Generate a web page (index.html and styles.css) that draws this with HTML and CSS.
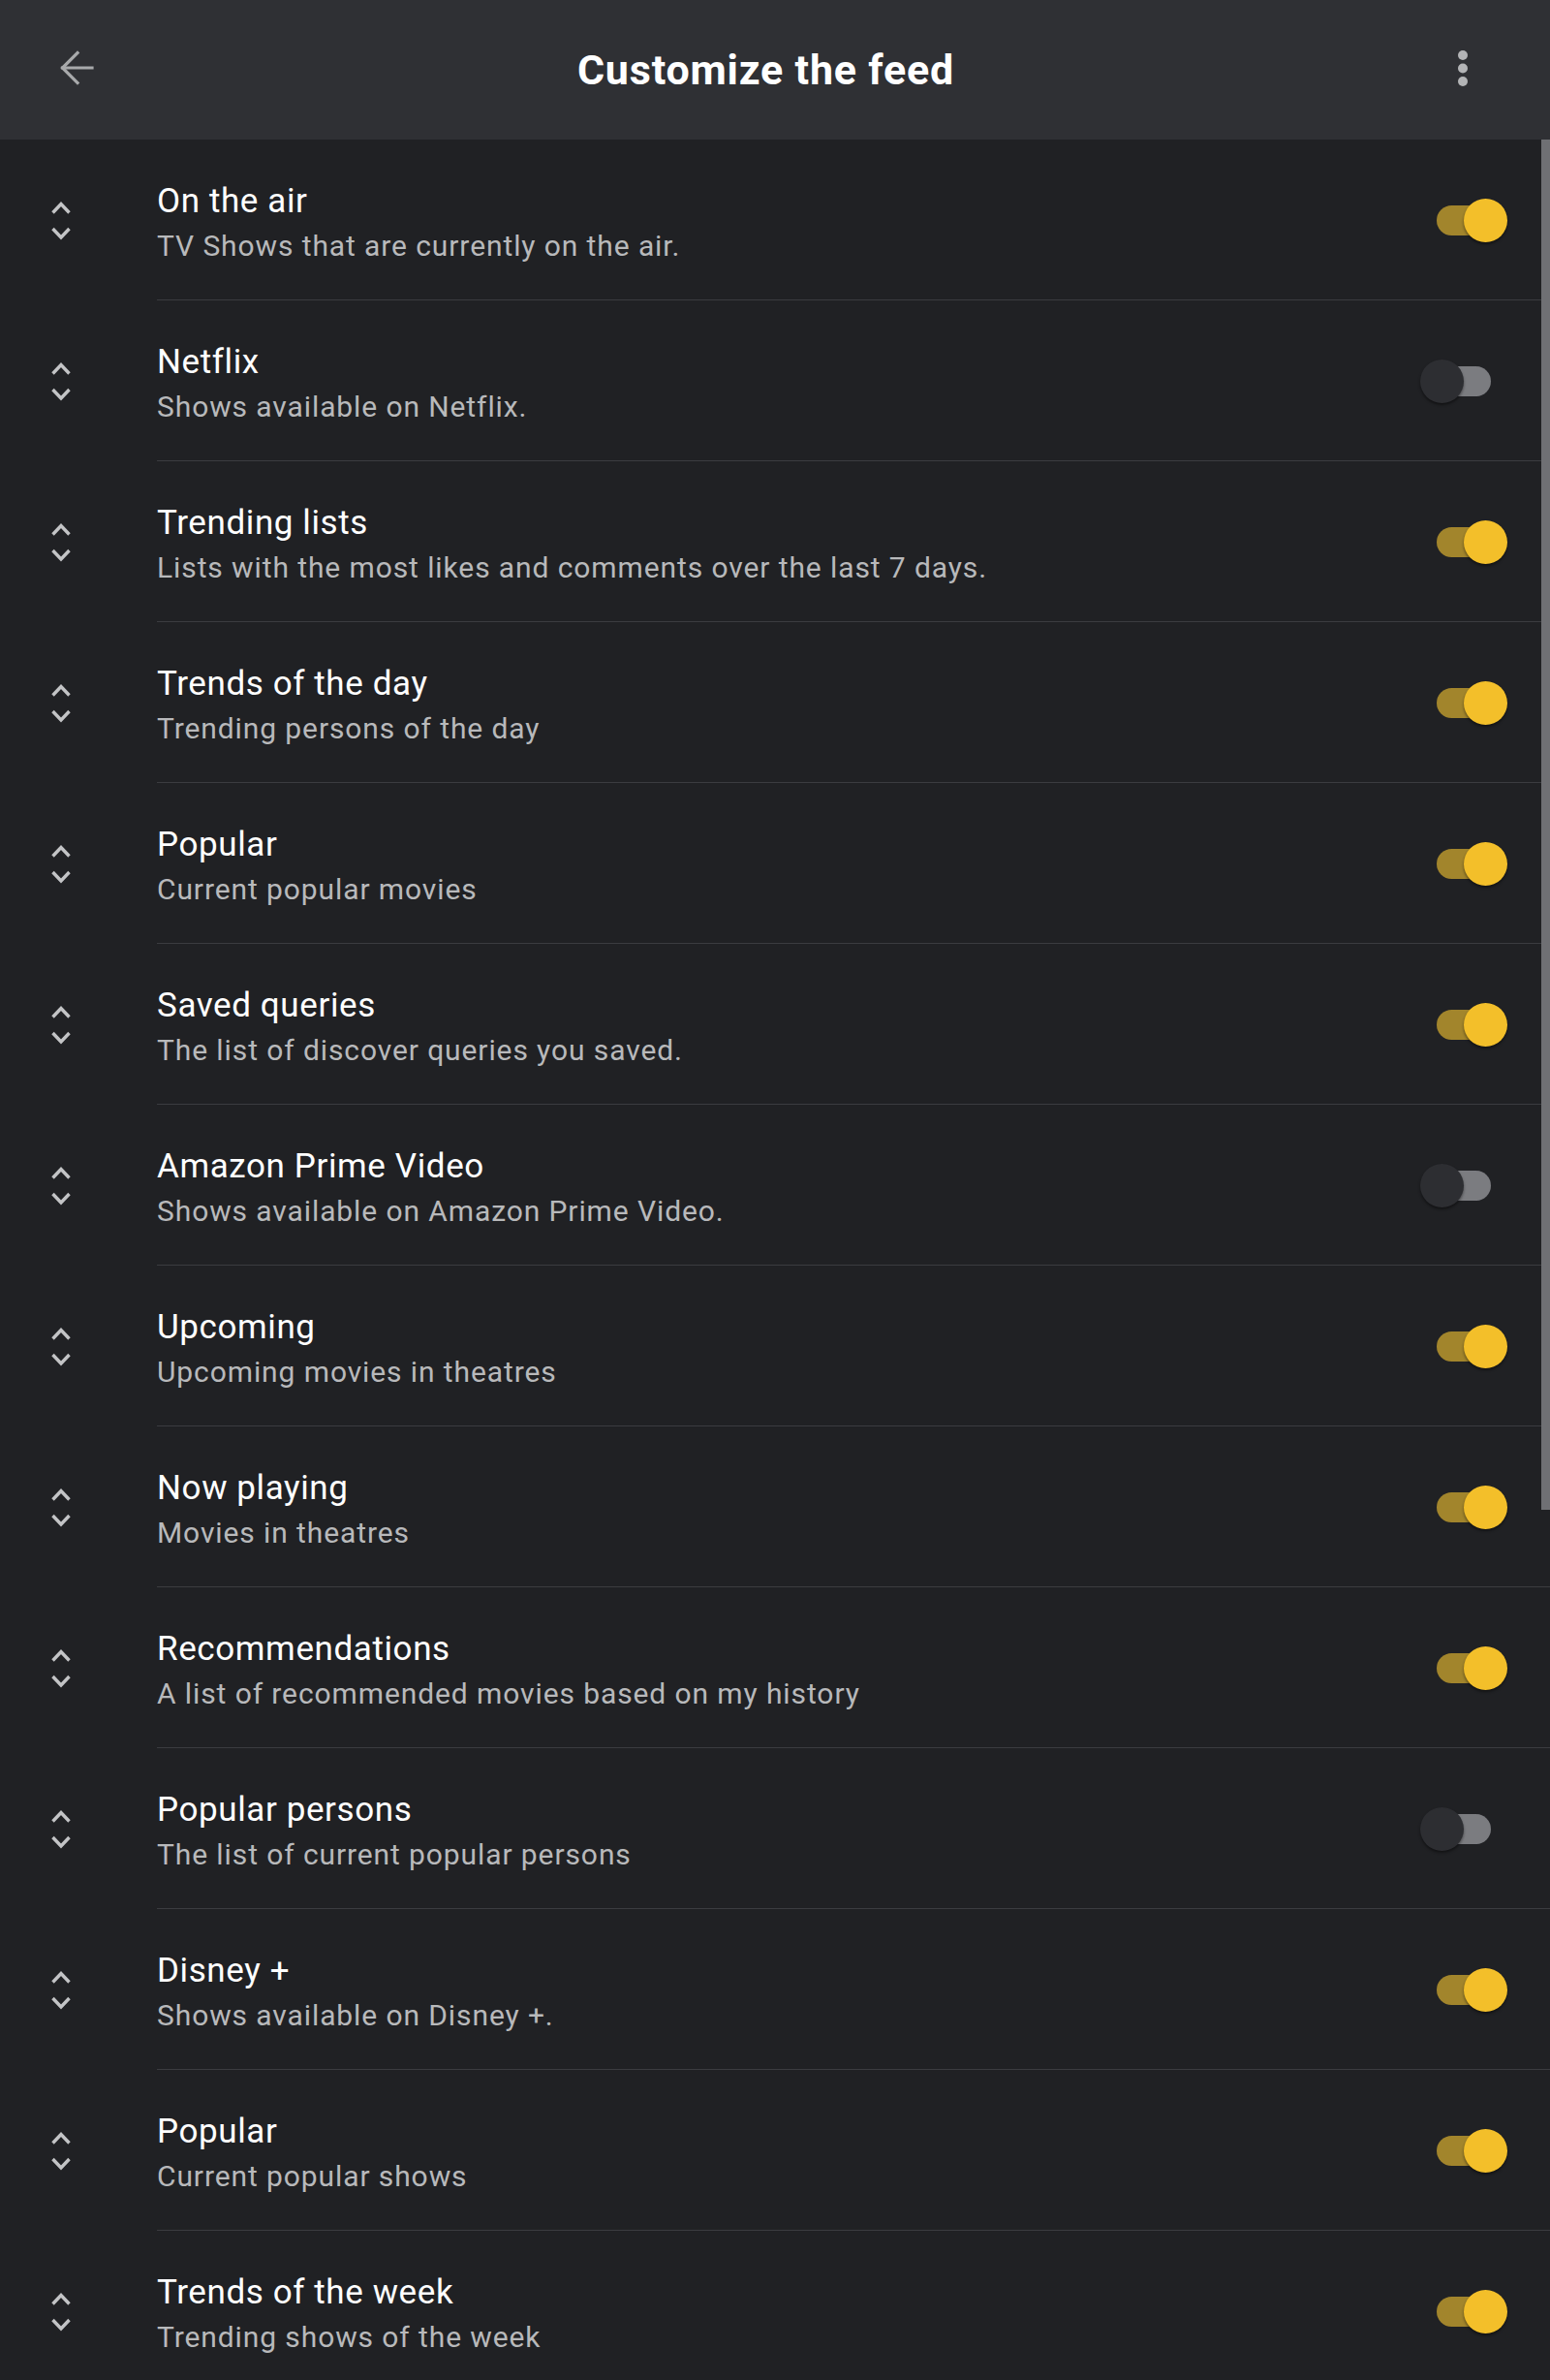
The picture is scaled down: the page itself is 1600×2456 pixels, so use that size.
FILE: index.html
```html
<!DOCTYPE html>
<html lang="en">
<head>
<meta charset="utf-8">
<title>Customize the feed</title>
<link rel="stylesheet" href="styles.css">
</head>
<body>
<div class="app">
  <header class="topbar">
    <button class="icon-btn back" aria-label="Back">
      <svg width="36" height="36" viewBox="0 0 36 36" fill="none" stroke="currentColor" stroke-width="3.2" stroke-linecap="square" stroke-linejoin="miter"><path d="M3.5 18H34"/><path d="M19 2.5L3.5 18L19 33.5"/></svg>
    </button>
    <h1 class="title">Customize the feed</h1>
    <button class="icon-btn more" aria-label="More options">
      <svg width="12" height="40" viewBox="0 0 12 40" fill="currentColor"><circle cx="6" cy="6" r="5"/><circle cx="6" cy="19.5" r="5"/><circle cx="6" cy="33" r="5"/></svg>
    </button>
  </header>

  <main class="list">
    <div class="row"><div class="handle"><svg class="chev" viewBox="0 0 20 41" fill="none" stroke="currentColor" stroke-width="3.4"><path d="M1.5 12.5L10 3.5L18.5 12.5"/><path d="M1.5 29L10 38L18.5 29"/></svg></div><div class="main"><div class="text"><div class="name">On the air</div><div class="desc">TV Shows that are currently on the air.</div></div><div class="switch on"><span class="track"></span><span class="thumb"></span></div></div></div>
    <div class="row"><div class="handle"><svg class="chev" viewBox="0 0 20 41" fill="none" stroke="currentColor" stroke-width="3.4"><path d="M1.5 12.5L10 3.5L18.5 12.5"/><path d="M1.5 29L10 38L18.5 29"/></svg></div><div class="main"><div class="text"><div class="name">Netflix</div><div class="desc">Shows available on Netflix.</div></div><div class="switch off"><span class="track"></span><span class="thumb"></span></div></div></div>
    <div class="row"><div class="handle"><svg class="chev" viewBox="0 0 20 41" fill="none" stroke="currentColor" stroke-width="3.4"><path d="M1.5 12.5L10 3.5L18.5 12.5"/><path d="M1.5 29L10 38L18.5 29"/></svg></div><div class="main"><div class="text"><div class="name">Trending lists</div><div class="desc">Lists with the most likes and comments over the last 7 days.</div></div><div class="switch on"><span class="track"></span><span class="thumb"></span></div></div></div>
    <div class="row"><div class="handle"><svg class="chev" viewBox="0 0 20 41" fill="none" stroke="currentColor" stroke-width="3.4"><path d="M1.5 12.5L10 3.5L18.5 12.5"/><path d="M1.5 29L10 38L18.5 29"/></svg></div><div class="main"><div class="text"><div class="name">Trends of the day</div><div class="desc">Trending persons of the day</div></div><div class="switch on"><span class="track"></span><span class="thumb"></span></div></div></div>
    <div class="row"><div class="handle"><svg class="chev" viewBox="0 0 20 41" fill="none" stroke="currentColor" stroke-width="3.4"><path d="M1.5 12.5L10 3.5L18.5 12.5"/><path d="M1.5 29L10 38L18.5 29"/></svg></div><div class="main"><div class="text"><div class="name">Popular</div><div class="desc">Current popular movies</div></div><div class="switch on"><span class="track"></span><span class="thumb"></span></div></div></div>
    <div class="row"><div class="handle"><svg class="chev" viewBox="0 0 20 41" fill="none" stroke="currentColor" stroke-width="3.4"><path d="M1.5 12.5L10 3.5L18.5 12.5"/><path d="M1.5 29L10 38L18.5 29"/></svg></div><div class="main"><div class="text"><div class="name">Saved queries</div><div class="desc">The list of discover queries you saved.</div></div><div class="switch on"><span class="track"></span><span class="thumb"></span></div></div></div>
    <div class="row"><div class="handle"><svg class="chev" viewBox="0 0 20 41" fill="none" stroke="currentColor" stroke-width="3.4"><path d="M1.5 12.5L10 3.5L18.5 12.5"/><path d="M1.5 29L10 38L18.5 29"/></svg></div><div class="main"><div class="text"><div class="name">Amazon Prime Video</div><div class="desc">Shows available on Amazon Prime Video.</div></div><div class="switch off"><span class="track"></span><span class="thumb"></span></div></div></div>
    <div class="row"><div class="handle"><svg class="chev" viewBox="0 0 20 41" fill="none" stroke="currentColor" stroke-width="3.4"><path d="M1.5 12.5L10 3.5L18.5 12.5"/><path d="M1.5 29L10 38L18.5 29"/></svg></div><div class="main"><div class="text"><div class="name">Upcoming</div><div class="desc">Upcoming movies in theatres</div></div><div class="switch on"><span class="track"></span><span class="thumb"></span></div></div></div>
    <div class="row"><div class="handle"><svg class="chev" viewBox="0 0 20 41" fill="none" stroke="currentColor" stroke-width="3.4"><path d="M1.5 12.5L10 3.5L18.5 12.5"/><path d="M1.5 29L10 38L18.5 29"/></svg></div><div class="main"><div class="text"><div class="name">Now playing</div><div class="desc">Movies in theatres</div></div><div class="switch on"><span class="track"></span><span class="thumb"></span></div></div></div>
    <div class="row"><div class="handle"><svg class="chev" viewBox="0 0 20 41" fill="none" stroke="currentColor" stroke-width="3.4"><path d="M1.5 12.5L10 3.5L18.5 12.5"/><path d="M1.5 29L10 38L18.5 29"/></svg></div><div class="main"><div class="text"><div class="name">Recommendations</div><div class="desc">A list of recommended movies based on my history</div></div><div class="switch on"><span class="track"></span><span class="thumb"></span></div></div></div>
    <div class="row"><div class="handle"><svg class="chev" viewBox="0 0 20 41" fill="none" stroke="currentColor" stroke-width="3.4"><path d="M1.5 12.5L10 3.5L18.5 12.5"/><path d="M1.5 29L10 38L18.5 29"/></svg></div><div class="main"><div class="text"><div class="name">Popular persons</div><div class="desc">The list of current popular persons</div></div><div class="switch off"><span class="track"></span><span class="thumb"></span></div></div></div>
    <div class="row"><div class="handle"><svg class="chev" viewBox="0 0 20 41" fill="none" stroke="currentColor" stroke-width="3.4"><path d="M1.5 12.5L10 3.5L18.5 12.5"/><path d="M1.5 29L10 38L18.5 29"/></svg></div><div class="main"><div class="text"><div class="name">Disney +</div><div class="desc">Shows available on Disney +.</div></div><div class="switch on"><span class="track"></span><span class="thumb"></span></div></div></div>
    <div class="row"><div class="handle"><svg class="chev" viewBox="0 0 20 41" fill="none" stroke="currentColor" stroke-width="3.4"><path d="M1.5 12.5L10 3.5L18.5 12.5"/><path d="M1.5 29L10 38L18.5 29"/></svg></div><div class="main"><div class="text"><div class="name">Popular</div><div class="desc">Current popular shows</div></div><div class="switch on"><span class="track"></span><span class="thumb"></span></div></div></div>
    <div class="row"><div class="handle"><svg class="chev" viewBox="0 0 20 41" fill="none" stroke="currentColor" stroke-width="3.4"><path d="M1.5 12.5L10 3.5L18.5 12.5"/><path d="M1.5 29L10 38L18.5 29"/></svg></div><div class="main"><div class="text"><div class="name">Trends of the week</div><div class="desc">Trending shows of the week</div></div><div class="switch on"><span class="track"></span><span class="thumb"></span></div></div></div>
    <div class="scrollbar"></div>
  </main>
</div>
</body>
</html>
```

FILE: styles.css
```css
html, body {
  margin: 0;
  padding: 0;
  height: 2456px;
  overflow: hidden;
  background: #202124;
}

body {
  font-family: Roboto, "Noto Sans", "Liberation Sans", sans-serif;
  color: #ffffff;
}

.app {
  width: 1600px;
  height: 2456px;
  overflow: hidden;
}

.topbar {
  height: 144px;
  background: #2f3034;
  display: flex;
  align-items: center;
  position: relative;
}

.icon-btn {
  background: none;
  border: 0;
  padding: 0;
  display: flex;
  align-items: center;
  justify-content: center;
  cursor: pointer;
}

.back {
  color: #a8a9ab;
  margin-left: 61px;
  width: 36px;
  height: 36px;
  margin-top: -4px;
}

.title {
  flex: 1;
  margin: 0;
  text-align: center;
  font-size: 43px;
  line-height: 1;
  font-weight: 700;
  letter-spacing: 0.8px;
  color: #ffffff;
  margin-top: 0;
  padding-right: 20px;
}

.more {
  color: #b3b4b6;
  width: 12px;
  height: 40px;
  margin-right: 84px;
  margin-top: -3px;
}

.list {
  position: relative;
}

.row {
  display: flex;
  align-items: stretch;
}

.handle {
  width: 162px;
  flex: none;
  display: flex;
  align-items: center;
  padding-left: 53px;
  box-sizing: border-box;
  color: #c3c4c6;
}

.chev {
  width: 20px;
  height: 41px;
  margin-top: 1px;
}

.main {
  flex: 1;
  height: 165px;
  border-bottom: 1px solid #3b3c40;
  display: flex;
  align-items: center;
}

.text {
  flex: 1;
  padding-top: 8px;
}

.name {
  font-size: 35px;
  line-height: 46px;
  letter-spacing: 0.6px;
  color: #ffffff;
}

.desc {
  font-size: 30px;
  line-height: 46px;
  letter-spacing: 0.9px;
  color: #b8b9bb;
}

.switch {
  position: relative;
  width: 90px;
  height: 47px;
  margin-right: 44px;
  flex: none;
  margin-top: 2px;
}

.track {
  position: absolute;
  top: 8px;
  width: 64px;
  height: 31px;
  border-radius: 16px;
}

.thumb {
  position: absolute;
  top: 1px;
  width: 45px;
  height: 45px;
  border-radius: 50%;
  box-shadow: 0 2px 3px rgba(0, 0, 0, 0.45);
}

.switch.on .track {
  left: 17px;
  background: #a2852c;
}

.switch.on .thumb {
  left: 45px;
  background: #f3bf2a;
}

.switch.off .track {
  left: 9px;
  background: #7b7c80;
}

.switch.off .thumb {
  left: 0;
  background: #2d2e32;
}

.scrollbar {
  position: absolute;
  top: 0;
  right: 0;
  width: 9px;
  height: 1414px;
  background: #6f7074;
}
```
